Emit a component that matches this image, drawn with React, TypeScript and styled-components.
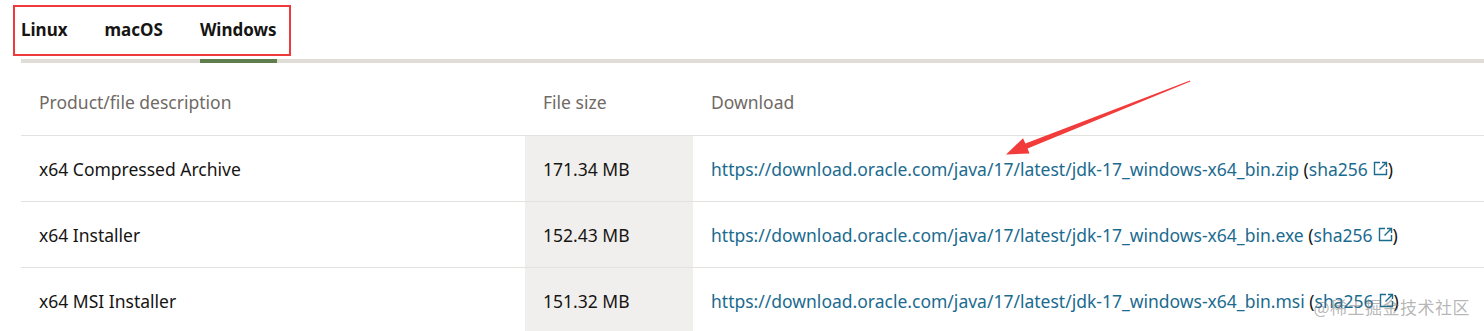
import React from 'react';
import styled, { createGlobalStyle } from 'styled-components';

const GlobalStyle = createGlobalStyle`
  html, body {
    margin: 0;
    padding: 0;
    background: #ffffff;
  }
  body {
    font-family: "Noto Sans", "Open Sans", Arial, sans-serif;
    color: #161513;
    overflow: hidden;
  }
`;

const Page = styled.div`
  position: relative;
  width: 1484px;
  height: 331px;
  padding-left: 21px;
  box-sizing: border-box;
  overflow: hidden;
`;

const TabBar = styled.div`
  display: flex;
  gap: 37px;
  height: 59px;
  border-bottom: 4px solid #e0ddd6;
`;

const Tab = styled.div<{ $active?: boolean }>`
  display: flex;
  align-items: center;
  margin-bottom: -4px;
  height: 59px;
  font-size: 17px;
  font-weight: 700;
  color: #161513;
  border-bottom: 4px solid ${(p) => (p.$active ? '#5f7d4d' : 'transparent')};
`;

// red annotation box drawn over the tabs
const Highlight = styled.div`
  position: absolute;
  left: 13px;
  top: 5px;
  width: 278px;
  height: 51px;
  border: 2px solid #f0393b;
  box-sizing: border-box;
  pointer-events: none;
`;

const Table = styled.div`
  display: grid;
  grid-template-columns: 504px 168px 1fr;
`;

const HeadCell = styled.div`
  height: 73px;
  box-sizing: border-box;
  display: flex;
  align-items: center;
  padding: 5px 0 0 18px;
  font-size: 17.5px;
  color: #6f6a65;
  border-bottom: 1px solid #e4e2df;
`;

const Cell = styled.div<{ $shaded?: boolean }>`
  height: 66px;
  box-sizing: border-box;
  display: flex;
  align-items: center;
  padding-left: 18px;
  font-size: 17.5px;
  color: #161513;
  white-space: nowrap;
  border-bottom: 1px solid #e4e2df;
  background: ${(p) => (p.$shaded ? '#f1efed' : 'transparent')};
`;

const Link = styled.a`
  color: #1b6b8f;
  text-decoration: none;
`;

const Sha = styled.span`
  color: #1b6b8f;
  display: inline-flex;
  align-items: center;
  gap: 5px;
`;

const Watermark = styled.div`
  position: absolute;
  right: 14px;
  bottom: 12px;
  font-family: "Noto Sans CJK SC", "Noto Sans", sans-serif;
  font-size: 17px;
  color: rgba(120, 120, 120, 0.55);
  letter-spacing: 0.5px;
  pointer-events: none;
`;

const Overlay = styled.svg`
  position: absolute;
  left: 0;
  top: 0;
  pointer-events: none;
`;

const ExternalIcon = () => (
  <svg width="15" height="15" viewBox="0 0 15 15" fill="none" stroke="#1b6b8f" strokeWidth="1.4">
    <path d="M7 1.5H1.5v12h12V8" />
    <path d="M6.5 8.5L13.5 1.5M9 1.5h4.5V6" />
  </svg>
);

const rows = [
  { name: 'x64 Compressed Archive', size: '171.34 MB', file: 'jdk-17_windows-x64_bin.zip' },
  { name: 'x64 Installer', size: '152.43 MB', file: 'jdk-17_windows-x64_bin.exe' },
  { name: 'x64 MSI Installer', size: '151.32 MB', file: 'jdk-17_windows-x64_bin.msi' },
];

const App: React.FC = () => {
  return (
    <Page>
      <GlobalStyle />
      <TabBar>
        <Tab>Linux</Tab>
        <Tab>macOS</Tab>
        <Tab $active>Windows</Tab>
      </TabBar>
      <Highlight />

      <Table>
        <HeadCell>Product/file description</HeadCell>
        <HeadCell>File size</HeadCell>
        <HeadCell>Download</HeadCell>
        {rows.map((r) => (
          <React.Fragment key={r.file}>
            <Cell>{r.name}</Cell>
            <Cell $shaded>{r.size}</Cell>
            <Cell>
              <Link href="#">https://download.oracle.com/java/17/latest/{r.file}</Link>
              &nbsp;(
              <Sha>
                sha256
                <ExternalIcon />
              </Sha>
              )
            </Cell>
          </React.Fragment>
        ))}
      </Table>

      <Overlay width="1484" height="331" viewBox="0 0 1484 331">
        <polygon
          fill="#f23b3b"
          points="1190,80.5 1190.4,81.6 1027.6,148.4 1029.5,153.6 1006,154.5 1023,138.3 1025.4,143.4"
        />
      </Overlay>
      <Watermark>@稀土掘金技术社区</Watermark>
    </Page>
  );
};

export default App;
